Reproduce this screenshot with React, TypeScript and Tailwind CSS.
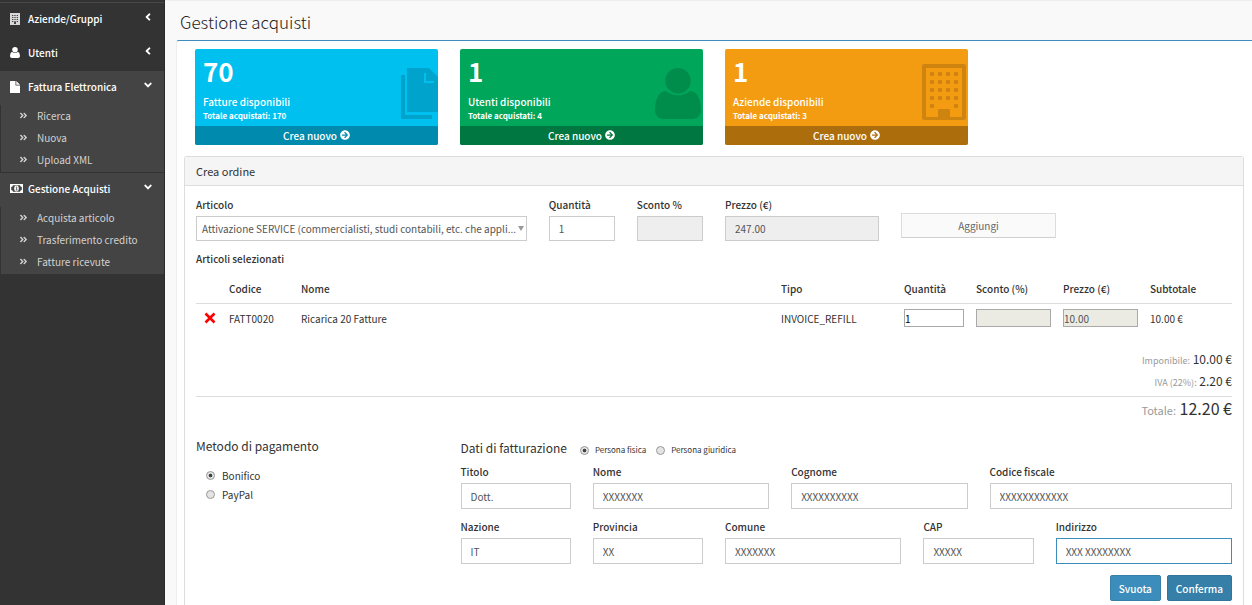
import type { ReactNode } from "react";
import { FaAngleDoubleRight, FaAngleDown, FaAngleLeft, FaArrowCircleRight } from "react-icons/fa";

function BuildingIcon({ className }: { className?: string }) {
  const rows = [10, 18, 26, 34];
  const cols = [10, 18, 26, 34];
  return (
    <svg viewBox="0 0 44 56" className={className} aria-hidden="true">
      <path
        fill="currentColor"
        fillRule="evenodd"
        d="M2 0H42Q44 0 44 2V54Q44 56 42 56H2Q0 56 0 54V2Q0 0 2 0ZM4 4V53H16V46Q16 45 17 45H27Q28 45 28 46V53H40V4Z"
      />
      {rows.map((y) => cols.map((x) => <rect key={`${x}-${y}`} x={x - 2} y={y - 2} width="4" height="4" rx="1" fill="currentColor" />))}
      <rect x="8" y="40" width="4" height="4" rx="1" fill="currentColor" />
      <rect x="32" y="40" width="4" height="4" rx="1" fill="currentColor" />
    </svg>
  );
}

function SmallBuildingIcon({ className }: { className?: string }) {
  return (
    <svg viewBox="0 0 10 12" className={className} aria-hidden="true">
      <rect width="10" height="12" fill="#d8d8d8" />
      <path d="M2 2.500H8M2 4.500H8M2 6.500H8M2 8.500H8" stroke="#444" strokeWidth="1" strokeDasharray="1 .67" />
      <rect x="4" y="9" width="2" height="2" fill="#444" />
    </svg>
  );
}

function PersonIcon({ className }: { className?: string }) {
  return (
    <svg viewBox="0 0 46 51" className={className} fill="currentColor" aria-hidden="true">
      <circle cx="23" cy="12.8" r="12.8" />
      <path d="M11 23C3 23 0 33 0 42C0 47.500 3.500 51 8.500 51H37.500C42.500 51 46 47.500 46 42C46 33 43 23 35 23C32 25.500 28 27.300 23 27.300C18 27.300 14 25.500 11 23Z" />
    </svg>
  );
}

function CopyIcon({ className }: { className?: string }) {
  return (
    <svg viewBox="0 0 42 51" className={className} fill="currentColor" aria-hidden="true">
      <path d="M0 7H4V47H31V51H0Z" />
      <path fillRule="evenodd" d="M6 0H28L42 14V44H6ZM23 5V15H33V13H25V5Z" />
    </svg>
  );
}

function FileIcon({ className }: { className?: string }) {
  return (
    <svg viewBox="0 0 10 12" className={className} fill="currentColor" aria-hidden="true">
      <path d="M.500 0H5.500V4.500H10V11.500Q10 12 9.500 12H.500Q0 12 0 11.500V.500Q0 0 .500 0ZM6.300 0L10 3.700H6.300Z" />
    </svg>
  );
}

function MoneyIcon({ className }: { className?: string }) {
  return (
    <svg viewBox="0 0 13 9" className={className} aria-hidden="true">
      <path fill="currentColor" fillRule="evenodd" d="M0 0H13V9H0ZM3 1.200A2 2 0 0 1 1.200 3V6A2 2 0 0 1 3 7.800H10A2 2 0 0 1 11.800 6V3A2 2 0 0 1 10 1.200Z" />
      <ellipse cx="6.500" cy="4.500" rx="2.300" ry="2.900" fill="currentColor" />
      <path d="M5.900 3.300L6.700 2.900V5.900M5.700 6H7.500" stroke="#444" strokeWidth=".8" fill="none" />
    </svg>
  );
}

function MenuHead({ icon, label, open }: { icon: ReactNode; label: string; open?: boolean }) {
  return (
    <a href="#" className="flex h-[34px] items-center px-[10px] pb-[3px] text-[10px] font-medium text-white">
      <span className="flex w-[18px] items-center">{icon}</span>
      <span className="flex-1">{label}</span>
      <span className="flex w-[12px] justify-center pb-[3px]">
        {open ? <FaAngleDown className="size-[12px]" /> : <FaAngleLeft className="size-[12px]" />}
      </span>
    </a>
  );
}

function SubMenu({ items }: { items: string[] }) {
  return (
    <ul className="border-l border-[#333] pb-px">
      {items.map((item) => (
        <li key={item}>
          <a href="#" className="flex h-[22px] items-center pb-[2px] pl-[18px] text-[10px] text-[#d2d2d2]">
            <FaAngleDoubleRight className="mr-[9px] size-[9px]" />
            {item}
          </a>
        </li>
      ))}
    </ul>
  );
}

type CardProps = { count: number; title: string; total: number; tone: string; footTone: string; icon: ReactNode };

function StatCard({ count, title, total, tone, footTone, icon }: CardProps) {
  return (
    <section className={`relative col-span-3 overflow-hidden rounded-[2px] font-medium text-white ${tone}`}>
      <div className="h-[77px] px-[8px] pt-[6px]">
        <div className="text-[26px] font-bold leading-[31px]">{count}</div>
        <div className="pt-[9px] text-[10px] leading-[14px]">{title}</div>
        <div className="text-[8px] font-bold leading-[14px]">Totale acquistati: {total}</div>
      </div>
      <div className="absolute right-0 top-[14px] text-black/15">{icon}</div>
      <a href="#" className={`flex h-[19px] items-center justify-center gap-[3px] pb-px text-[10px] ${footTone}`}>
        Crea nuovo <FaArrowCircleRight className="size-[10px]" />
      </a>
    </section>
  );
}

type FieldProps = { id: string; label: string; value: string; span: string; disabled?: boolean; tall?: boolean; active?: boolean };

function Field({ id, label, value, span, disabled, tall, active }: FieldProps) {
  return (
    <div className={span}>
      <label htmlFor={id} className="block text-[10px] font-medium leading-[18px]">
        {label}
      </label>
      <input
        id={id}
        defaultValue={value}
        disabled={disabled}
        className={`mt-[2px] block w-full border px-[9px] text-[10px] text-[#555] outline-none ${tall ? "h-[26px]" : "h-[25px]"} ${
          active ? "border-[#3c8dbc]" : "border-[#ccc]"
        } ${disabled ? "bg-[#eee]" : "bg-white"}`}
      />
    </div>
  );
}

const radioStyle =
  "size-[9px] appearance-none rounded-full border border-[#999] bg-[#e4e4e4] checked:bg-[radial-gradient(circle,#444_30%,#e4e4e4_45%)]";

const cellInput = "block h-[18px] w-full border border-[#a9a9a9] text-[10px]";

export default function App() {
  return (
    <div className="flex min-h-screen bg-[#f9f9f9] font-['Noto_Sans_CJK_SC','Open_Sans',sans-serif] text-[#333]">
      <nav className="w-[165px] shrink-0 border-r border-[#2a2a2a] bg-[#333] pt-[2px]">
        <div className="border-t border-[#484848]">
          <MenuHead icon={<SmallBuildingIcon className="h-[12px] w-[10px]" />} label="Aziende/Gruppi" />
        </div>
        <MenuHead icon={<PersonIcon className="h-[11px] w-[10px]" />} label="Utenti" />
        <div className="bg-[#444]">
          <MenuHead icon={<FileIcon className="h-[12px] w-[10px]" />} label="Fattura Elettronica" open />
          <SubMenu items={["Ricerca", "Nuova", "Upload XML"]} />
        </div>
        <div className="border-t border-[#333] bg-[#444]">
          <MenuHead icon={<MoneyIcon className="h-[9px] w-[13px]" />} label="Gestione Acquisti" open />
          <SubMenu items={["Acquista articolo", "Trasferimento credito", "Fatture ricevute"]} />
        </div>
      </nav>

      <main className="flex min-w-0 flex-1 flex-col border-t border-[#eee] pl-[11px]">
        <h1 className="h-[39px] pl-[4px] pt-px text-[17px] font-light leading-[39px] text-[#222]">Gestione acquisti</h1>
        <div className="flex flex-1 flex-col rounded-tl-[3px] border-l border-t border-l-[#eee] border-t-[#3c8dbc] bg-white pl-[7px] pr-[8px]">
          <div className="grid grid-cols-12 gap-x-[22px] px-[11px] pb-[11px] pt-[8px]">
            <StatCard
              count={70}
              title="Fatture disponibili"
              total={170}
              tone="bg-[#00c0ef]"
              footTone="bg-[#008aae]"
              icon={<CopyIcon className="-mr-[5px] mt-[5px] h-[51px] w-[42px]" />}
            />
            <StatCard
              count={1}
              title="Utenti disponibili"
              total={4}
              tone="bg-[#00a65a]"
              footTone="bg-[#007740]"
              icon={<PersonIcon className="mr-[2px] mt-[5px] h-[51px] w-[46px]" />}
            />
            <StatCard
              count={1}
              title="Aziende disponibili"
              total={3}
              tone="bg-[#f39c12]"
              footTone="bg-[#ac6e0d]"
              icon={<BuildingIcon className="mr-[2px] mt-px h-[56px] w-[44px]" />}
            />
          </div>

          <section className="flex flex-1 flex-col rounded-t-[3px] border border-b-0 border-[#ddd]">
            <h2 className="border-b border-[#ddd] bg-[#f5f5f5] px-[11px] text-[11px] leading-[28px]">Crea ordine</h2>
            <div className="px-[11px] pt-[10px]">
              <form className="grid grid-cols-12 gap-x-[22px]" onSubmit={(e) => e.preventDefault()}>
                <div className="relative col-span-4">
                  <label htmlFor="articolo" className="block text-[10px] font-medium leading-[18px]">
                    Articolo
                  </label>
                  <select
                    id="articolo"
                    className="mt-[2px] block h-[25px] w-full appearance-none border border-[#ccc] bg-white pl-[5px] pr-[8px] text-[10px] text-[#555]"
                  >
                    <option>Attivazione SERVICE (commercialisti, studi contabili, etc. che appli...</option>
                  </select>
                  <svg viewBox="0 0 6 5" className="pointer-events-none absolute bottom-[10px] right-[3px] h-[5px] w-[6px]" aria-hidden="true">
                    <path d="M0 0H6L3 5Z" fill="#999" />
                  </svg>
                </div>
                <Field id="quantita" label="Quantità" value="1" span="col-span-1" />
                <Field id="sconto" label="Sconto %" value="" span="col-span-1" disabled />
                <Field id="prezzo" label="Prezzo (€)" value="247.00" span="col-span-2" disabled />
                <button className="col-span-2 mt-[17px] h-[25px] border border-[#ddd] border-b-[#d0d0d0] bg-[#fafafa] text-[10px] text-[#666]">
                  Aggiungi
                </button>
              </form>

              <h3 className="pt-[9px] text-[10px] font-medium leading-[18px]">Articoli selezionati</h3>

              <table className="mt-[6px] w-full table-fixed text-left text-[10px]">
                <colgroup>
                  <col className="w-[27px]" />
                  <col className="w-[72px]" />
                  <col />
                  <col className="w-[123px]" />
                  <col className="w-[72px]" />
                  <col className="w-[87px]" />
                  <col className="w-[87px]" />
                  <col className="w-[88px]" />
                </colgroup>
                <thead>
                  <tr className="h-[29px] border-b border-[#ddd] *:px-[6px] *:font-medium">
                    <th></th>
                    <th>Codice</th>
                    <th>Nome</th>
                    <th>Tipo</th>
                    <th>Quantità</th>
                    <th>Sconto (%)</th>
                    <th>Prezzo (€)</th>
                    <th>Subtotale</th>
                  </tr>
                </thead>
                <tbody>
                  <tr className="h-[30px] *:px-[6px]">
                    <td>
                      <button aria-label="Rimuovi" className="flex w-[15px] justify-center">
                        <svg viewBox="0 0 12 12" className="size-[12px]" aria-hidden="true">
                          <path d="M1.500 1.500L10.500 10.500M10.500 1.500L1.500 10.500" stroke="#f00" strokeWidth="2.600" />
                        </svg>
                      </button>
                    </td>
                    <td>FATT0020</td>
                    <td>Ricarica 20 Fatture</td>
                    <td>INVOICE_REFILL</td>
                    <td>
                      <input aria-label="Quantità" defaultValue="1" className={`${cellInput} bg-white text-black`} />
                    </td>
                    <td>
                      <input aria-label="Sconto (%)" disabled className={`${cellInput} bg-[#ebebe4] text-[#545454]`} />
                    </td>
                    <td>
                      <input aria-label="Prezzo (€)" disabled defaultValue="10.00" className={`${cellInput} bg-[#ebebe4] text-[#545454]`} />
                    </td>
                    <td>10.00 €</td>
                  </tr>
                </tbody>
              </table>

              <div className="pt-[15px] text-right text-[12px] leading-[22px]">
                <p>
                  <span className="text-[9px] leading-none text-[#999]">Imponibile:</span> 10.00 €
                </p>
                <p>
                  <span className="text-[9px] leading-none text-[#999]">IVA (22%):</span> 2.20 €
                </p>
                <p className="mt-[4px] border-t border-[#ddd] text-[16px]">
                  <span className="text-[11px] leading-none text-[#999]">Totale:</span> 12.20 €
                </p>
              </div>

              <div className="grid grid-cols-12 gap-x-[22px] pt-[16px]">
                <fieldset className="col-span-3">
                  <legend className="text-[12px] leading-[22px]">Metodo di pagamento</legend>
                  <div className="flex flex-col pl-[10px] pt-[9px] text-[10px] leading-[19px]">
                    <label className="flex items-center gap-[7px]">
                      <input type="radio" name="pagamento" defaultChecked className={radioStyle} />
                      Bonifico
                    </label>
                    <label className="flex items-center gap-[7px]">
                      <input type="radio" name="pagamento" className={radioStyle} />
                      PayPal
                    </label>
                  </div>
                </fieldset>

                <form className="col-span-9" onSubmit={(e) => e.preventDefault()}>
                  <div className="flex items-center gap-[10px] pb-[2px] text-[8px] leading-[22px]">
                    <h3 className="mr-[3px] text-[12px]">Dati di fatturazione</h3>
                    <label className="flex items-center gap-[6px] pt-[4px]">
                      <input type="radio" name="persona" defaultChecked className={radioStyle} />
                      Persona fisica
                    </label>
                    <label className="flex items-center gap-[6px] pt-[4px]">
                      <input type="radio" name="persona" className={radioStyle} />
                      Persona giuridica
                    </label>
                  </div>
                  <div className="grid grid-cols-12 gap-x-[22px] gap-y-[9px]">
                    <Field id="titolo" label="Titolo" value="Dott." span="col-span-2" tall />
                    <Field id="nome" label="Nome" value="XXXXXXX" span="col-span-3" tall />
                    <Field id="cognome" label="Cognome" value="XXXXXXXXXX" span="col-span-3" tall />
                    <Field id="cf" label="Codice fiscale" value="XXXXXXXXXXXX" span="col-span-4" tall />
                    <Field id="nazione" label="Nazione" value="IT" span="col-span-2" tall />
                    <Field id="provincia" label="Provincia" value="XX" span="col-span-2" tall />
                    <Field id="comune" label="Comune" value="XXXXXXX" span="col-span-3" tall />
                    <Field id="cap" label="CAP" value="XXXXX" span="col-span-2" tall />
                    <Field id="indirizzo" label="Indirizzo" value="XXX XXXXXXXX" span="col-span-3" tall active />
                  </div>
                  <div className="flex justify-end gap-[6px] pt-[11px] text-[10px] font-medium text-white">
                    <button type="reset" className="h-[26px] rounded-[2px] border border-[#367fa9] bg-[#3c8dbc] px-[8px]">
                      Svuota
                    </button>
                    <button className="h-[26px] rounded-[2px] border border-[#31759b] bg-[#367fa9] px-[8px]">Conferma</button>
                  </div>
                </form>
              </div>
            </div>
          </section>
        </div>
      </main>
    </div>
  );
}
